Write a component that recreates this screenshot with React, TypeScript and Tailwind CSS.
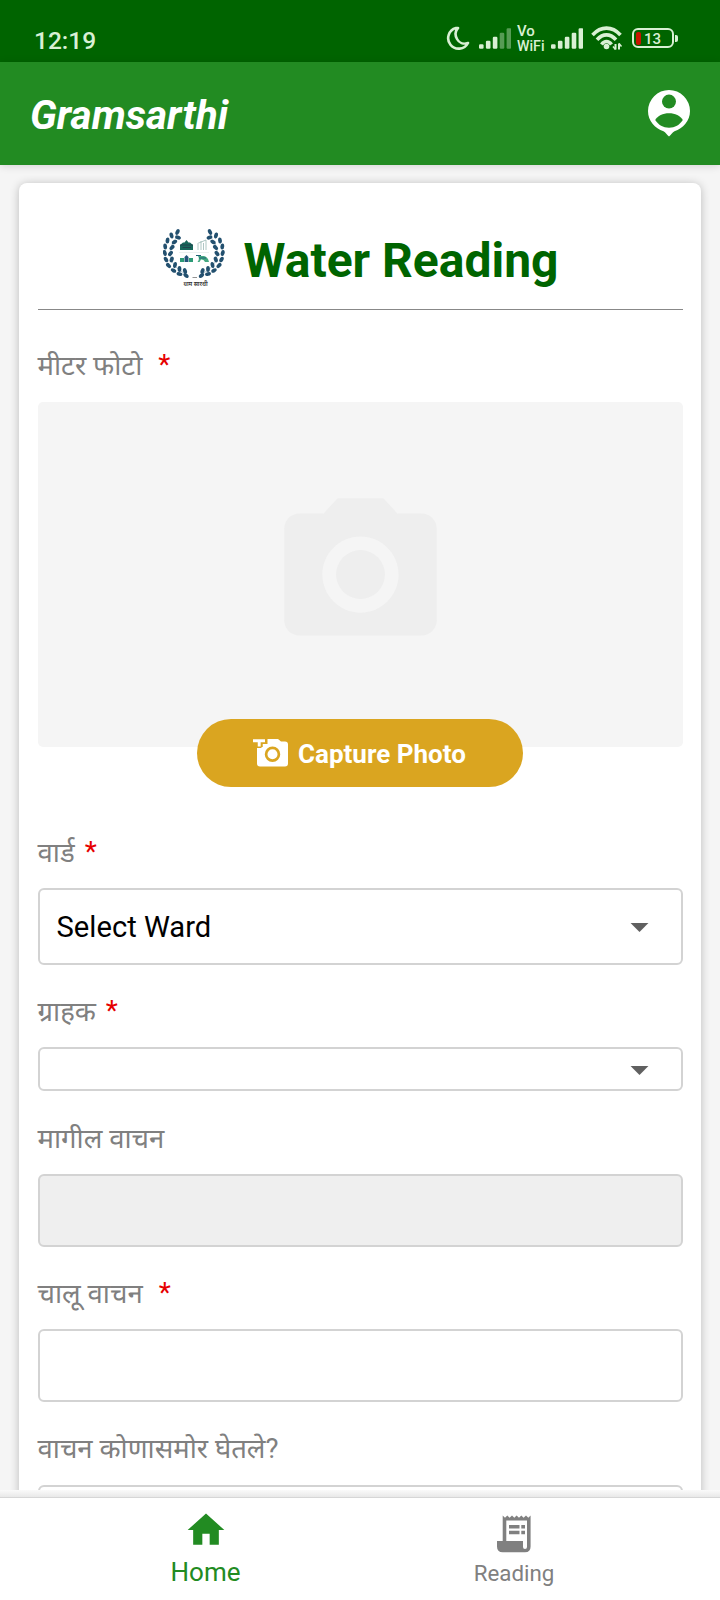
import { MdCameraAlt, MdHome, MdArrowDropDown } from "react-icons/md";
import type { ReactNode } from "react";

function Bars({ faded }: { faded: number }) {
  const xs = [0, 6.9, 13.8, 20.7, 27.6];
  const hs = [4.5, 8, 12, 16, 20.5];
  return (
    <svg width="32" height="21" viewBox="0 0 32 21" fill="#d9f0d4">
      {xs.map((x, i) => (
        <rect key={x} x={x} y={20.7 - hs[i]} width="4.6" height={hs[i]} rx="1.2" opacity={i >= 5 - faded ? 0.4 : 1} />
      ))}
    </svg>
  );
}

function StatusBar() {
  return (
    <div className="flex h-[62px] shrink-0 items-start bg-[#006400] text-[#d9f0d4]">
      <span className="mt-[26px] ml-[34px] w-[412px] text-[24.500px] leading-[29px] font-medium">12:19</span>
      <svg className="mt-[26px] block shrink-0" width="24" height="25" viewBox="0 0 24 25" fill="none" stroke="#d9f0d4" strokeWidth="2.6" strokeLinejoin="round">
        <path d="M10 2A10.500 10.500 0 1 0 22 17C17.500 18.500 13 16.800 11 13C9 9.200 9 5 12 2Z" />
      </svg>
      <div className="mt-[28px] ml-[9px] shrink-0"><Bars faded={2} /></div>
      <div className="mt-[24px] ml-[6px] w-[28px] shrink-0 font-medium">
        <div className="text-[15px] leading-[15px]">Vo</div>
        <div className="text-[14.200px] leading-[15px]">WiFi</div>
      </div>
      <div className="mt-[28px] ml-[6px] shrink-0"><Bars faded={0} /></div>
      <svg className="mt-[26px] ml-[8px] block shrink-0" width="32" height="25" viewBox="0 0 32 25" fill="none" stroke="#d9f0d4" strokeWidth="3.6">
        <path d="M1.500 9C10 -0.200 21 -0.200 29.500 9" />
        <path d="M6 13.700C12 7.200 19 7.200 25 13.700" />
        <path d="M10.500 18.500C13.500 14.500 17.500 14.500 20.500 18.500" />
        <circle cx="15.500" cy="20.500" r="2.800" fill="#d9f0d4" stroke="none" />
        <path d="M24.500 18V23.500M28 17.500V23.500" strokeWidth="2" />
        <path d="M22 20.500L24.500 23.500M30.500 20.500L28 17.500" strokeWidth="1.500" />
      </svg>
      <div className="mt-[28px] ml-[9px] flex shrink-0 items-center">
        <div className="flex h-[20px] w-[42px] items-center rounded-[6px] border-2 border-[#d9f0d4] pl-[2px]">
          <span className="h-[13px] w-[5px] rounded-[2px] bg-[#c81400]" />
          <span className="mt-px ml-[3px] text-[15px] leading-[16px] font-medium">13</span>
        </div>
        <span className="ml-[1px] h-[7px] w-[3px] rounded-r-[2px] bg-[#d9f0d4]" />
      </div>
    </div>
  );
}

function ProfileIcon() {
  return (
    <svg className="block" width="42" height="47" viewBox="0 0 42 47">
      <path fill="#fff" d="M21 0A21 21 0 0 0 0 21C0 31 7 38.500 15.500 41.200C17.500 42 19.200 45 21 46.500C22.800 45 24.500 42 26.500 41.200C35 38.500 42 31 42 21A21 21 0 0 0 21 0Z" />
      <circle cx="21" cy="11.600" r="7" fill="#228b22" />
      <path fill="#228b22" d="M7.200 30C9.500 26 15 23.300 21 23.300S32.500 26 34.800 30C31.500 35 27 37.700 21 37.700S10.500 35 7.200 30Z" />
    </svg>
  );
}

const sprig = [
  [14.5, 3, 25], [8.500, 6.500, -15], [15, 8.500, 110], [4.500, 11.500, 5], [11.500, 13, 60], [2.200, 17.500, -5], [9, 18.500, 45],
  [1.800, 24, -15], [7.500, 24.500, 40], [3, 30.500, -30], [8.700, 30.500, 20], [5.500, 36.500, -45],
  [12, 36, 10], [10.500, 41.500, -60], [16.500, 40, 0], [16.500, 45, -75], [22, 42, -20], [23, 46.500, -50],
];

function Sprig() {
  return (
    <g>
      <path d="M14 8C4 18 4 35 21 44" fill="none" stroke="#6f96a8" strokeWidth="0.500" />
      {sprig.map(([x, y, a]) => (
        <ellipse key={`${x}-${y}`} cx={x} cy={y} rx="1.900" ry="3" fill="#23506f" transform={`rotate(${a} ${x} ${y})`} />
      ))}
    </g>
  );
}

function Emblem() {
  return (
    <svg className="block shrink-0" width="62" height="58" viewBox="0 0 62 58">
      <Sprig />
      <g transform="translate(61.500 0) scale(-1 1)"><Sprig /></g>
      <path fill="#17675a" d="M17 21V16L20 13.500H21.500L23.500 11L25.500 13.500H27L30 16V21Z" />
      <path d="M17 16H30M19.500 18.500H28" stroke="#1f3f4c" strokeWidth="0.900" />
      <path d="M35 21V15M38 21V12M40.500 21V14M43 21V11M34.500 14.500L43 11" stroke="#9bb9b5" strokeWidth="0.800" fill="none" />
      <path d="M16 23.500H46" stroke="#d8e3e2" strokeWidth="0.500" />
      <path fill="#2c9a76" d="M17 33V29H21V33ZM26 33V29H30V33Z" />
      <path fill="#24557a" d="M21.500 33V28L23.500 26L25.500 28V33Z" />
      <path fill="#45a881" d="M35 27H41Q45 28 46 33H42Q41 30 38 30.500L36.500 33H34.500Q37 30 35 27Z" />
      <path d="M33 26.500H38M36 29H43" stroke="#1f6277" strokeWidth="1" />
      <path d="M29.500 48.500H34" stroke="#777" strokeWidth="0.800" />
      <text x="32.500" y="56.500" textAnchor="middle" fontSize="5.800" fontWeight="600" fill="#333">ग्राम सारथी</text>
    </svg>
  );
}

function CaptureIcon() {
  return (
    <svg className="block shrink-0" width="35" height="28" viewBox="0 0 35 28">
      <path fill="#fff" d="M14.500 0H25L28 2.500H32Q35 2.500 35 5.500V24.500Q35 27.500 32 27.500H7Q4 27.500 4 24.500V9H8.500V5H14.500Z" />
      <path d="M0 2.300H12.500M7 2.300V8" stroke="#daa520" strokeWidth="5.500" fill="none" />
      <path d="M0 1.700H12M6.200 1.700V7.500" stroke="#fff" strokeWidth="2.900" fill="none" />
      <circle cx="19.500" cy="15.200" r="6.400" stroke="#daa520" strokeWidth="2.700" fill="#fff" />
    </svg>
  );
}

function ReceiptIcon() {
  return (
    <svg className="block" width="34" height="38" viewBox="0 0 34 38" fill="#808080">
      <path
        fillRule="evenodd"
        d="M5.700 0.500L8 2.800L10.300 0.500L12.600 2.800L15 0.500L17.300 2.800L19.600 0.500L22 2.800L24.300 0.500L26.600 2.800L29 0.500L31.300 2.800L33.600 0.500V31.500Q33.600 37.300 28 37.300H5.700Q0 37.300 0 31.500V26H5.700ZM9.300 5.500V26H26V32Q26 34 28 34T30 32V5.500Z"
      />
      <path d="M12 10H22.500V13.500H12ZM24.300 10H28V13.500H24.300ZM12 15.700H22.500V19.200H12ZM24.300 15.700H28V19.200H24.300Z" />
    </svg>
  );
}

function Label({ children, required, gap = "ml-[10px]" }: { children: ReactNode; required?: boolean; gap?: string }) {
  return (
    <div className="flex h-[40px] items-center text-[27.500px] leading-[40px] whitespace-nowrap text-[#808080]">
      <span>{children}</span>
      {required && <span className={`${gap} -mt-[2px] text-[28px] text-[#e60000]`}>*</span>}
    </div>
  );
}

function Field({ className, children }: { className: string; children?: ReactNode }) {
  return <div className={`flex shrink-0 items-center rounded-[6px] border-2 border-[#d3d3d3] ${className}`}>{children}</div>;
}

function Caret() {
  return <MdArrowDropDown className="mr-[20px] ml-auto size-[43px] text-[#606060]" />;
}

export default function App() {
  return (
    <div className="flex h-[1600px] w-[720px] flex-col overflow-hidden bg-[#f5f5f5] font-[Roboto,'Noto_Sans','Noto_Sans_Devanagari',sans-serif]">
      <StatusBar />
      <header className="z-10 flex h-[102.500px] shrink-0 items-start justify-between bg-[#228b22] pr-[30px] pl-[30px] shadow-[0_1px_8px_rgba(0,0,0,0.14)]">
        <h1 className="mt-[30px] text-[40.600px] leading-[47px] font-bold text-white italic">Gramsarthi</h1>
        <div className="mt-[28px]"><ProfileIcon /></div>
      </header>

      <main className="min-h-0 flex-1 overflow-hidden px-[19px] pt-[18.500px]">
        <section className="flex h-[1500px] flex-col rounded-[8px] bg-white pr-[18.500px] pl-[18.500px] shadow-[0_1px_10px_rgba(0,0,0,0.24)]">
          <div className="flex h-[127px] shrink-0 items-start border-b border-[#888] pl-[125px]">
            <div className="mt-[46px]"><Emblem /></div>
            <h2 className="mt-[50px] ml-[19px] text-[48px] leading-[56px] font-bold whitespace-nowrap text-[#006400]">Water Reading</h2>
          </div>

          <div className="mt-[36px]"><Label required gap="ml-[16px]">मीटर फोटो</Label></div>
          <div className="mt-[16px] flex h-[345px] shrink-0 flex-col items-center rounded-[5px] bg-[#f5f5f5]">
            <MdCameraAlt className="mt-[81px] size-[183px] shrink-0 text-[#eeeeee]" />
            <button className="mt-[53px] flex h-[68px] w-[326px] shrink-0 items-center rounded-full bg-[#daa520] pl-[56px] text-[26px] font-bold text-white">
              <CaptureIcon />
              <span className="mt-[2px] ml-[10px] whitespace-nowrap">Capture Photo</span>
            </button>
          </div>

          <div className="mt-[86px]"><Label required>वार्ड</Label></div>
          <Field className="mt-[15px] h-[77px] pl-[17px] text-[29.200px] text-black">
            <span className="mt-[3px]">Select Ward</span>
            <Caret />
          </Field>
          <div className="mt-[27px]"><Label required>ग्राहक</Label></div>
          <Field className="mt-[15px] h-[44px]"><Caret /></Field>
          <div className="mt-[28px]"><Label>मागील वाचन</Label></div>
          <Field className="mt-[15px] h-[73px] bg-[#efefef]" />
          <div className="mt-[27px]"><Label required gap="ml-[16px]">चालू वाचन</Label></div>
          <Field className="mt-[15px] h-[73px]" />
          <div className="mt-[27px]"><Label>वाचन कोणासमोर घेतले?</Label></div>
          <Field className="mt-[16px] h-[73px]" />
        </section>
      </main>

      <div className="flex h-[7px] shrink-0 bg-linear-to-b from-[#fafafa] to-[#e8e8e8]" />
      <nav className="flex h-[103px] shrink-0 border-t border-[#d6d6d6] bg-white">
        <div className="flex w-[411px] flex-col items-center pt-[10px] text-[#228b22]">
          <MdHome className="size-[44px]" />
          <span className="mt-[5px] text-[26px] leading-[30px]">Home</span>
        </div>
        <div className="flex w-[206px] flex-col items-center pt-[17px] text-[#808080]">
          <ReceiptIcon />
          <span className="mt-[6px] text-[22.300px] leading-[28px]">Reading</span>
        </div>
      </nav>
    </div>
  );
}
